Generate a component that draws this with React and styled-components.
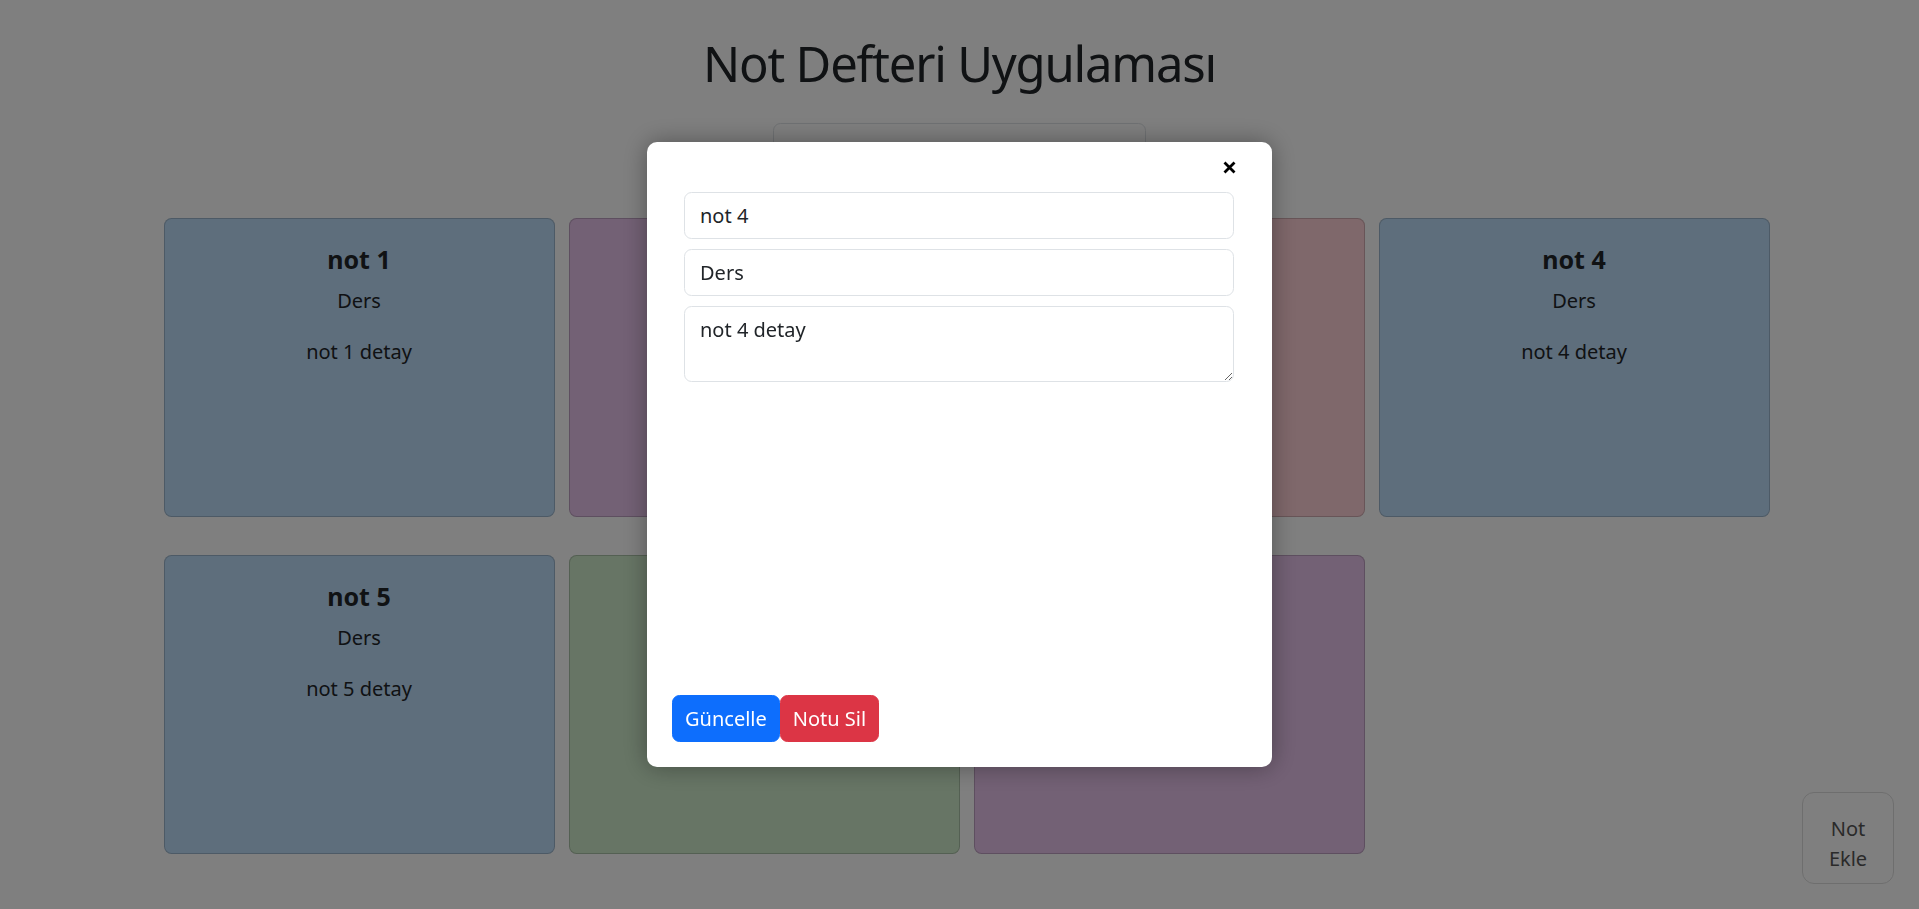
import React, { useState } from 'react';
import styled, { createGlobalStyle } from 'styled-components';

const GlobalStyle = createGlobalStyle`
  html, body {
    margin: 0;
    padding: 0;
  }
  body {
    font-family: "Noto Sans", "Open Sans", sans-serif;
    font-size: 20px;
    line-height: 1.5;
    color: #212529;
    background: #fff;
  }
  * {
    box-sizing: border-box;
  }
`;

const Page = styled.div`
  min-height: 100vh;
  display: flex;
  flex-direction: column;
  align-items: center;
  padding-top: 33px;
`;

const Title = styled.h1`
  margin: 0 0 30px;
  font-size: 49px;
  font-weight: 400;
  line-height: 60px;
  letter-spacing: -1.2px;
`;

const SearchInput = styled.input`
  width: 373px;
  height: 47px;
  padding: 7.5px 15px;
  font: inherit;
  color: #212529;
  border: 1px solid #dee2e6;
  border-radius: 7.5px;
  background: #fff;
`;

const NoteGrid = styled.div`
  width: 1620px;
  display: flex;
  flex-wrap: wrap;
  margin-top: 48px;
`;

const NoteCard = styled.div`
  width: 391px;
  height: 299px;
  margin: 0 0 38px 14px;
  padding: 25px 20px;
  text-align: center;
  background: ${(p) => p.$bg};
  border: 1px solid rgba(0, 0, 0, 0.175);
  border-radius: 7.5px;
`;

const NoteTitle = styled.h5`
  margin: 0 0 12px;
  font-size: 25px;
  font-weight: 700;
  line-height: 1.2;
`;

const NoteText = styled.p`
  margin: 0 0 21px;
`;

const AddButton = styled.button`
  position: fixed;
  right: 25px;
  bottom: 25px;
  width: 92px;
  height: 92px;
  padding: 12px 8px 0;
  font: inherit;
  color: #555;
  background: #fff;
  border: 1px solid #dcdcdc;
  border-radius: 12px;
  cursor: pointer;
`;

const Backdrop = styled.div`
  position: fixed;
  inset: 0;
  display: flex;
  align-items: center;
  justify-content: center;
  background: rgba(0, 0, 0, 0.5);
`;

const Modal = styled.div`
  width: 625px;
  height: 625px;
  display: flex;
  flex-direction: column;
  padding: 13px 25px 25px;
  background: #fff;
  border-radius: 10px;
  box-shadow: 0 0 24px rgba(0, 0, 0, 0.35);
`;

const CloseRow = styled.div`
  height: 24px;
  display: flex;
  align-items: center;
  justify-content: flex-end;
  padding-right: 11px;
`;

const CloseButton = styled.button`
  display: flex;
  padding: 0;
  border: none;
  background: none;
  cursor: pointer;
`;

const Form = styled.div`
  flex: 1;
  display: flex;
  flex-direction: column;
  gap: 10px;
  margin-top: 13px;
  padding: 0 13px 0 12px;
`;

const Field = styled.input`
  width: 100%;
  height: 47px;
  padding: 7.5px 15px;
  font: inherit;
  color: #212529;
  border: 1px solid #dee2e6;
  border-radius: 7.5px;
  outline: none;
`;

const Area = styled.textarea`
  width: 100%;
  height: 76px;
  padding: 7.5px 15px;
  font: inherit;
  color: #212529;
  border: 1px solid #dee2e6;
  border-radius: 7.5px;
  resize: vertical;
  outline: none;
`;

const ButtonRow = styled.div`
  display: flex;
`;

const ActionButton = styled.button`
  padding: 7.5px 12px;
  font: inherit;
  color: #fff;
  background: ${(p) => p.$bg};
  border: 1px solid ${(p) => p.$bg};
  border-radius: 7.5px;
  cursor: pointer;
`;

const notes = [
  { id: 1, title: 'not 1', category: 'Ders', detail: 'not 1 detay', color: '#bddcf8' },
  { id: 2, title: 'not 2', category: 'Ders', detail: 'not 2 detay', color: '#e6c2ea' },
  { id: 3, title: 'not 3', category: 'Ders', detail: 'not 3 detay', color: '#fed0d6' },
  { id: 4, title: 'not 4', category: 'Ders', detail: 'not 4 detay', color: '#bddcf8' },
  { id: 5, title: 'not 5', category: 'Ders', detail: 'not 5 detay', color: '#bddcf8' },
  { id: 6, title: 'not 6', category: 'Ders', detail: 'not 6 detay', color: '#ceeaca' },
  { id: 7, title: 'not 7', category: 'Ders', detail: 'not 7 detay', color: '#e6c2ea' },
];

function CloseIcon() {
  return (
    <svg width="13" height="13" viewBox="0 0 13 13">
      <path d="M1.5 1.5 L11.5 11.5 M11.5 1.5 L1.5 11.5" stroke="#000" strokeWidth="2.8" />
    </svg>
  );
}

export default function App() {
  const [selected, setSelected] = useState(notes[3]);

  return (
    <>
      <GlobalStyle />
      <Page>
        <Title>Not Defteri Uygulaması</Title>
        <SearchInput />
        <NoteGrid>
          {notes.map((note) => (
            <NoteCard key={note.id} $bg={note.color} onClick={() => setSelected(note)}>
              <NoteTitle>{note.title}</NoteTitle>
              <NoteText>{note.category}</NoteText>
              <NoteText>{note.detail}</NoteText>
            </NoteCard>
          ))}
        </NoteGrid>
        <AddButton>Not Ekle</AddButton>
      </Page>
      {selected && (
        <Backdrop>
          <Modal>
            <CloseRow>
              <CloseButton onClick={() => setSelected(null)}>
                <CloseIcon />
              </CloseButton>
            </CloseRow>
            <Form>
              <Field defaultValue={selected.title} />
              <Field defaultValue={selected.category} />
              <Area defaultValue={selected.detail} />
            </Form>
            <ButtonRow>
              <ActionButton $bg="#0d6efd">Güncelle</ActionButton>
              <ActionButton $bg="#dc3545">Notu Sil</ActionButton>
            </ButtonRow>
          </Modal>
        </Backdrop>
      )}
    </>
  );
}
